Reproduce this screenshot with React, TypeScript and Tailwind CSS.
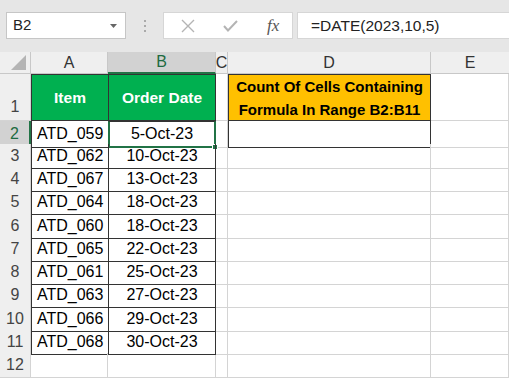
import React from 'react';

const rows = [
  ['ATD_059', '5-Oct-23'],
  ['ATD_062', '10-Oct-23'],
  ['ATD_067', '13-Oct-23'],
  ['ATD_064', '18-Oct-23'],
  ['ATD_060', '18-Oct-23'],
  ['ATD_065', '22-Oct-23'],
  ['ATD_061', '25-Oct-23'],
  ['ATD_063', '27-Oct-23'],
  ['ATD_066', '29-Oct-23'],
  ['ATD_068', '30-Oct-23'],
];

const heights = [23, 23, 23, 24, 23, 23, 23, 24, 23, 23, 23];

const cols = 'grid-cols-[31px_77px_108px_12px_203px_1fr]';

function RowHead({ n, selected }: { n: number; selected?: boolean }) {
  return (
    <div
      className={
        'flex items-center justify-center border-r border-b border-[#d4d4d4] text-[16px] ' +
        (selected ? 'bg-[#d2d2d2] text-[#1e6b41] border-r-[#217346] border-r-2' : 'bg-[#efefef] text-[#444]')
      }
    >
      {n}
    </div>
  );
}

export default function App() {
  return (
    <div className="w-[509px] h-[379px] overflow-hidden bg-white text-[15px] text-black" style={{ fontFamily: '"Liberation Sans", Arial, sans-serif' }}>
      {/* formula bar */}
      <div className="h-[52px] bg-[#e6e6e6] flex items-start pt-[12px]">
        <div className="ml-[6px] w-[120px] h-[27px] bg-white border border-[#c6c6c6] flex items-center justify-between pl-[6px] pr-[8px]">
          <span className="text-[#222]">B2</span>
          <svg width="7" height="4" viewBox="0 0 7 4"><path d="M0 0h7L3.5 4z" fill="#666" /></svg>
        </div>
        <div className="w-[37px] h-[27px] flex flex-col items-center justify-center gap-[3px]">
          <span className="w-[2px] h-[2px] bg-[#aaa]" />
          <span className="w-[2px] h-[2px] bg-[#aaa]" />
          <span className="w-[2px] h-[2px] bg-[#aaa]" />
        </div>
        <div className="w-[130px] h-[27px] bg-white border border-[#d6d6d6] flex items-center">
          <svg className="ml-[17px]" width="14" height="14" viewBox="0 0 14 14"><path d="M1 1l12 12M13 1L1 13" stroke="#b4b4b4" strokeWidth="1.4" /></svg>
          <svg className="ml-[28px]" width="15" height="12" viewBox="0 0 15 12"><path d="M1 6l4 4.5L14 1" stroke="#b4b4b4" strokeWidth="2" fill="none" /></svg>
          <span className="ml-[29px] text-[#555] italic text-[17px] leading-none" style={{ fontFamily: '"Liberation Serif", serif' }}>fx</span>
        </div>
        <div className="ml-[4px] flex-1 h-[27px] bg-white border border-[#d6d6d6] border-r-0 flex items-center pl-[13px] text-[#222] text-[15.5px]">
          =DATE(2023,10,5)
        </div>
      </div>

      {/* sheet */}
      <div className={'grid ' + cols + ' grid-rows-[22px_47px]'}>
        <div className="bg-[#efefef] border-r border-b border-[#c8c8c8] relative">
          <svg className="absolute right-[4px] bottom-[3px]" width="15" height="15" viewBox="0 0 15 15"><path d="M15 0v15H0z" fill="#b4b4b4" /></svg>
        </div>
        <div className="bg-[#efefef] border-r border-b border-[#c8c8c8] flex items-center justify-center text-[#333] text-[16px]">A</div>
        <div className="bg-[#d2d2d2] border-r border-[#c8c8c8] border-b-2 border-b-[#217346] flex items-center justify-center text-[#1e6b41] text-[16px]">B</div>
        <div className="bg-[#efefef] border-r border-b border-[#c8c8c8] flex items-center justify-center text-[#333] text-[16px]">C</div>
        <div className="bg-[#efefef] border-r border-b border-[#c8c8c8] flex items-center justify-center text-[#333] text-[16px]">D</div>
        <div className="bg-[#efefef] border-b border-[#c8c8c8] flex items-center justify-center text-[#333] w-[78px] text-[16px]">E</div>

        {/* row 1 */}
        <div className="bg-[#efefef] border-r border-b border-[#d4d4d4] flex items-end justify-center pb-[1px] text-[#444] text-[16px]">1</div>
        <div className="bg-[#00b050] border border-[#333] border-r-0 flex items-center justify-center font-bold text-white text-[15.5px]">Item</div>
        <div className="bg-[#00b050] border border-[#333] flex items-center justify-center font-bold text-white text-[15.5px]">Order Date</div>
        <div className="border-r border-b border-[#d4d4d4]" />
        <div className="bg-[#ffc000] border border-[#333] flex flex-col items-center justify-center font-bold text-[15px] leading-[23px]">
          <span>Count Of Cells Containing</span>
          <span>Formula In Range B2:B11</span>
        </div>
        <div className="border-r border-b border-[#d4d4d4] w-[78px]" />
      </div>

      {heights.map((h, i) => {
        const r = rows[i];
        const n = i + 2;
        return (
          <div key={n} className={'grid ' + cols} style={{ height: h }}>
            <RowHead n={n} selected={n === 2} />
            {r ? (
              <>
                <div className="border-l border-b border-[#333] flex items-center pl-[5px] text-[16px]">{r[0]}</div>
                <div
                  className={
                    'flex items-center justify-center relative text-[16px] ' +
                    (n === 2 ? 'border-2 border-[#217346] border-t-[#333] border-t' : 'border-l border-r border-b border-[#333]')
                  }
                >
                  {r[1]}
                  {n === 2 && <span className="absolute -right-[4px] -bottom-[4px] w-[6px] h-[6px] bg-[#217346] border border-white" />}
                </div>
              </>
            ) : (
              <>
                <div className="border-r border-b border-[#d4d4d4]" />
                <div className="border-r border-b border-[#d4d4d4]" />
              </>
            )}
            <div className="border-r border-b border-[#d4d4d4]" />
            {n === 2 ? (
              <div className="border-l border-r border-b border-[#333]" />
            ) : (
              <div className="border-r border-b border-[#d4d4d4]" />
            )}
            <div className="border-r border-b border-[#d4d4d4] w-[78px]" />
          </div>
        );
      })}
    </div>
  );
}
